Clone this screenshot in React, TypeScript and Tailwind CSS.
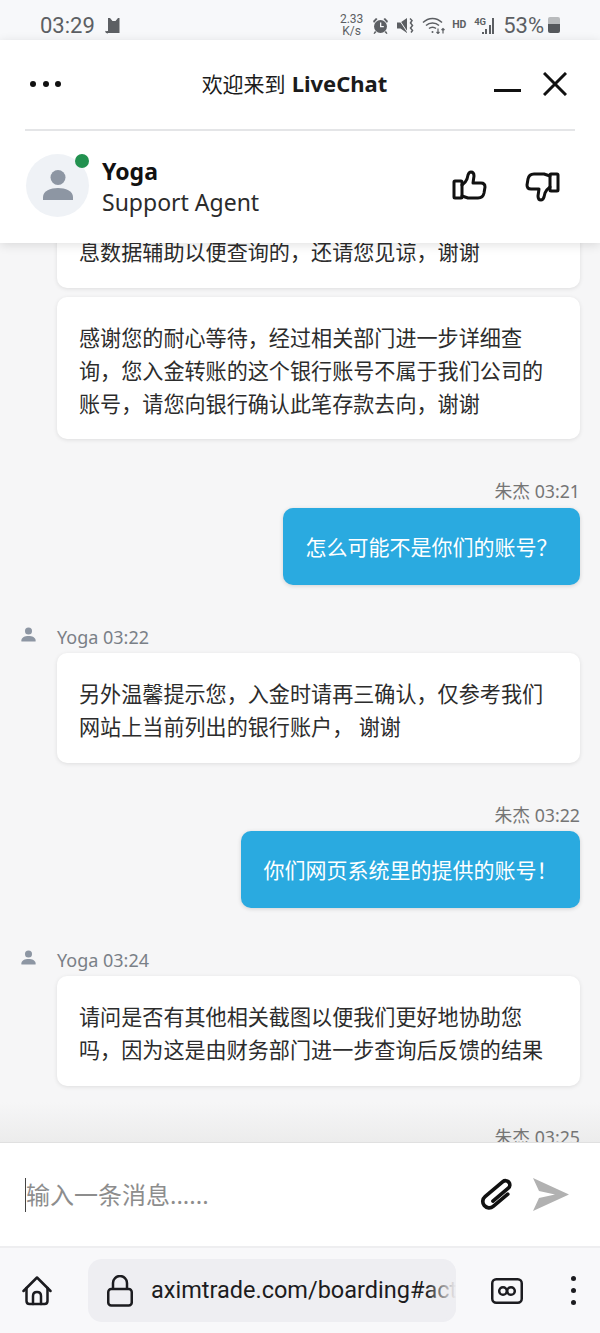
const fontStack = "font-['Noto_Sans','Noto_Sans_CJK_SC',sans-serif]";

function UserGlyph({ className }: { className: string }) {
  return (
    <svg viewBox="0 0 24 24" className={className} fill="currentColor">
      <circle cx="12" cy="7" r="5" />
      <path d="M2 22v-2c0-4 5-6 10-6s10 2 10 6v2z" />
    </svg>
  );
}

function ThumbIcon({ down }: { down?: boolean }) {
  return (
    <svg viewBox="0 0 36 34" className="h-[34px] w-[36px]" fill="none" stroke="#111" strokeWidth="3" strokeLinejoin="round" strokeLinecap="round">
      <g transform={down ? "rotate(180 18 17)" : undefined}>
        <rect x="2" y="12" width="8" height="17" rx="1" />
        <path d="M10 27l6 2h10q5 0 6-5l1-6q0-4-4-4h-8l1-7q0-4-3-4q-2 0-3 3l-1 4q-1 3-5 6" />
      </g>
    </svg>
  );
}

function StatusBar() {
  return (
    <div className="flex h-[40px] shrink-0 items-center justify-between bg-[#f7f8fa] pl-[40px] pr-[40px] pt-[10px] font-['Roboto',sans-serif] text-[#5c5f63]">
      <div className="flex items-center gap-[9px]">
        <span className="text-[22px]">03:29</span>
        <svg viewBox="0 0 18 17" className="h-[17px] w-[18px]" fill="#5c5f63">
          <path d="M6 1l2.500 3h3L14 1l1.500 0V16H4V1z" />
          <path d="M4 14c-2 0-2 1-2.500 0-.5-1-1 2.500 2.500 2.500z" />
        </svg>
      </div>
      <div className="flex items-center">
        <div className="flex w-[23px] flex-col items-center text-[12px] leading-[12px]">
          <span>2.33</span>
          <span>K/s</span>
        </div>
        <svg viewBox="0 0 17 17" className="ml-[9px] h-[17px] w-[17px]" fill="#5c5f63">
          <circle cx="8.500" cy="9.500" r="6.500" />
          <path d="M1 4l3-3 1.500 1-3.500 4zM16 4l-3-3-1.500 1 3.500 4zM3 14l-1.500 2.500 1 .5 2-2zM14 14l1.500 2.500-1 .5-2-2z" />
          <path d="M8 5.500h1.300v3.500h2.500v1.300H8z" fill="#f7f8fa" />
        </svg>
        <svg viewBox="0 0 17 17" className="ml-[8px] h-[17px] w-[17px]" fill="#5c5f63">
          <path d="M0 5.500h3.500L10 1v15L3.500 11.500H0z" />
          <path d="M13 1.500l2 2-1.500 2.500 2 2.500-2 2.500 2 2.500-1.500 2" fill="none" stroke="#5c5f63" strokeWidth="1.500" />
          <path d="M1 1l10 15" stroke="#f7f8fa" strokeWidth="1" />
        </svg>
        <svg viewBox="0 0 24 17" className="ml-[8px] h-[17px] w-[24px]" fill="none" stroke="#5c5f63" strokeWidth="1.500">
          <path d="M1 5.500c5.500-5.500 13.500-5.500 19 0M4 8.500c3.500-3.500 9.500-3.500 13 0M7 11.500c1.800-1.800 5.200-1.800 7 0" />
          <path d="M16 11.500v5M14.500 15l1.500 1.500 1.500-1.500M21 16.500v-5M19.500 13l1.500-1.500 1.500 1.500" strokeWidth="1.200" />
          <circle cx="10.500" cy="15" r="1" fill="#5c5f63" stroke="none" />
        </svg>
        <span className="ml-[6px] w-[13px] text-[10.500px] font-bold">HD</span>
        <div className="relative ml-[9px] h-[17px] w-[20px]">
          <span className="absolute left-0 top-0 text-[9.500px] font-bold leading-[9px]">4G</span>
          <div className="absolute bottom-0 right-0 flex items-end gap-[1.500px]">
            <div className="h-[2px] w-[2px] bg-[#5c5f63]" />
            <div className="h-[5px] w-[2px] bg-[#5c5f63]" />
            <div className="h-[9px] w-[2px] bg-[#5c5f63]" />
            <div className="h-[16px] w-[2px] bg-[#5c5f63]" />
          </div>
        </div>
        <span className="ml-[9px] text-[22px]">53%</span>
        <div className="ml-[4px] h-[16px] w-[12px] rounded-[2px] bg-[linear-gradient(#b9bbbd_45%,#55585c_45%)]" />
      </div>
    </div>
  );
}

function Header() {
  return (
    <div className="relative z-10 h-[203px] shrink-0 bg-white shadow-[0_2px_10px_rgba(0,0,0,0.12)]">
      <div className="mx-[25px] flex h-[91px] items-center justify-between border-b-2 border-[#e4e5e7] pb-[2px]">
        <div className="flex w-[36px] justify-between pl-[5px]">
          <div className="h-[6px] w-[6px] rounded-full bg-[#111]" />
          <div className="h-[6px] w-[6px] rounded-full bg-[#111]" />
          <div className="h-[6px] w-[6px] rounded-full bg-[#111]" />
        </div>
        <div className="ml-[34px] flex items-baseline gap-[6px] text-[21px] text-[#1b1b1b]">
          <span>欢迎来到</span>
          <span className="text-[22px] font-bold">LiveChat</span>
        </div>
        <div className="flex items-center gap-[22px] pr-[8px]">
          <div className="mt-[14px] h-[3px] w-[27px] bg-[#111]" />
          <svg viewBox="0 0 24 24" className="h-[24px] w-[24px]" fill="none" stroke="#111" strokeWidth="3">
            <path d="M1 1l22 22M23 1L1 23" />
          </svg>
        </div>
      </div>
      <div className="flex items-center justify-between pl-[26px] pr-[40px] pt-[21px]">
        <div className="flex items-center gap-[13px]">
          <div className="relative flex h-[63px] w-[63px] items-center justify-center rounded-full bg-[#eff2f6]">
            <UserGlyph className="h-[36px] w-[36px] text-[#8d96a3]" />
            <div className="absolute right-0 top-0 h-[14px] w-[14px] rounded-full bg-[#22914f]" />
          </div>
          <div className="mt-[4px] flex flex-col">
            <span className="text-[23px] font-bold leading-[31px] text-[#111]">Yoga</span>
            <span className="text-[23px] leading-[31px] text-[#2b2b2b]">Support Agent</span>
          </div>
        </div>
        <div className="mt-[2px] flex items-center gap-[36px]">
          <ThumbIcon />
          <ThumbIcon down />
        </div>
      </div>
    </div>
  );
}

function AgentCard({ lines, className = "pb-[20px]" }: { lines: string[]; className?: string }) {
  return (
    <div className={`ml-[57px] mr-[20px] rounded-[10px] bg-white pl-[22px] pr-[24px] pt-[24px] text-[21.100px] leading-[33px] text-[#2c2c2c] shadow-[0_1px_4px_rgba(0,0,0,0.1)] ${className}`}>
      {lines.map((line) => (
        <div key={line} className="whitespace-pre">
          {line}
        </div>
      ))}
    </div>
  );
}

function AgentMeta({ time }: { time: string }) {
  return (
    <div className="mb-[2px] flex h-[27px] items-center pl-[20px] text-[18px] text-[#7a8087]">
      <UserGlyph className="mb-[6px] h-[17px] w-[17px] text-[#8d96a3]" />
      <span className="ml-[20px]">{time}</span>
    </div>
  );
}

function UserMessage({ time, text, width }: { time: string; text?: string; width?: string }) {
  return (
    <div className="flex flex-col items-end pr-[20px]">
      <div className="mb-[2.500px] flex h-[27px] items-center text-[17.750px] text-[#757575]">{time}</div>
      {text && (
        <div className={`flex h-[77px] items-center justify-center rounded-[10px] bg-[#2aaae0] pt-[3px] text-[21px] text-white shadow-[0_1px_4px_rgba(0,0,0,0.15)] ${width}`}>
          {text}
        </div>
      )}
    </div>
  );
}

function ChatArea() {
  return (
    <div className="relative min-h-0 flex-1 overflow-hidden bg-[#f6f6f7]">
      <div className="absolute bottom-0 left-0 right-0 h-[40px] bg-gradient-to-b from-transparent to-[#ececec]" />
      <div className="relative -mt-[32px] flex flex-col">
        <AgentCard lines={["息数据辅助以便查询的，还请您见谅，谢谢"]} />
        <AgentCard lines={["感谢您的耐心等待，经过相关部门进一步详细查", "询，您入金转账的这个银行账号不属于我们公司的", "账号，请您向银行确认此笔存款去向，谢谢"]} className="mt-[9px] pb-[19px]" />
        <div className="mt-[39px]">
          <UserMessage time="朱杰 03:21" text="怎么可能不是你们的账号？" width="w-[297px]" />
        </div>
        <div className="mt-[39px]">
          <AgentMeta time="Yoga 03:22" />
          <AgentCard lines={["另外温馨提示您，入金时请再三确认，仅参考我们", "网站上当前列出的银行账户， 谢谢"]} />
        </div>
        <div className="mt-[39px]">
          <UserMessage time="朱杰 03:22" text="你们网页系统里的提供的账号！" width="w-[339px]" />
        </div>
        <div className="mt-[39px]">
          <AgentMeta time="Yoga 03:24" />
          <AgentCard lines={["请问是否有其他相关截图以便我们更好地协助您", "吗，因为这是由财务部门进一步查询后反馈的结果"]} />
        </div>
        <div className="mt-[38px]">
          <UserMessage time="朱杰 03:25" />
        </div>
      </div>
    </div>
  );
}

function InputBar() {
  return (
    <div className="flex h-[104px] shrink-0 items-center justify-between border-t border-[#e0e0e0] bg-white pl-[25px] pr-[31px]">
      <div className="flex items-center">
        <div className="h-[34px] w-px bg-[#444]" />
        <span className="text-[24px] text-[#8d8d8d]">输入一条消息......</span>
      </div>
      <div className="flex items-center gap-[16px]">
        <svg viewBox="0 0 36 32" className="h-[34px] w-[38px]" fill="none" stroke="#111" strokeWidth="3.500" strokeLinecap="round">
          <path transform="translate(5 26) rotate(-40)" d="M24 6H6A6 6 0 0 1 6 -6H28A4 4 0 0 1 28 2H9" />
        </svg>
        <svg viewBox="0 0 36 33" className="h-[33px] w-[36px]" fill="#b1b1b1">
          <path d="M0 0l36 16.500L0 33l6-13 16-3.500-16-3.500z" />
        </svg>
      </div>
    </div>
  );
}

function BrowserBar() {
  return (
    <div className="flex h-[87px] shrink-0 items-center border-t-2 border-[#eeeef0] bg-[#f8f8fa] pl-[22px] text-[#1c1c20]">
      <svg viewBox="0 0 30 30" className="h-[30px] w-[30px]" fill="none" stroke="#1c1c20" strokeWidth="2.500" strokeLinecap="round" strokeLinejoin="round">
        <path d="M1.500 15L15 1.500 28.500 15" />
        <path d="M4.500 12v13q0 3 3 3h15q3 0 3-3V12" />
        <path d="M11 28v-8q0-4 4-4t4 4v8" />
      </svg>
      <div className="relative ml-[36px] flex h-[63px] w-[368px] items-center overflow-hidden rounded-[14px] bg-[#eeeef2] pl-[19px]">
        <svg viewBox="0 0 26 32" className="h-[32px] w-[26px] shrink-0" fill="none" stroke="#1c1c20" strokeWidth="2.500">
          <rect x="1.250" y="14" width="23.500" height="16.500" rx="3" />
          <path d="M6 14V8a7 7 0 0 1 14 0v6" />
        </svg>
        <span className="ml-[18px] whitespace-nowrap font-['Roboto',sans-serif] text-[23.500px]">aximtrade.com/boarding#act</span>
        <div className="absolute bottom-0 right-0 top-0 w-[30px] bg-gradient-to-r from-transparent to-[#eeeef2]" />
      </div>
      <svg viewBox="0 0 32 26" className="ml-[35px] h-[26px] w-[32px]" fill="none" stroke="#1c1c20" strokeWidth="2.500">
        <rect x="1.250" y="1.250" width="29.500" height="23.500" rx="4" />
        <circle cx="12" cy="13" r="3.800" />
        <circle cx="20" cy="13" r="3.800" />
      </svg>
      <div className="ml-[48px] flex flex-col gap-[7px]">
        <div className="h-[5px] w-[5px] rounded-full bg-[#1c1c20]" />
        <div className="h-[5px] w-[5px] rounded-full bg-[#1c1c20]" />
        <div className="h-[5px] w-[5px] rounded-full bg-[#1c1c20]" />
      </div>
    </div>
  );
}

export default function App() {
  return (
    <div className={`flex h-[1333px] w-[600px] flex-col overflow-hidden ${fontStack}`}>
      <StatusBar />
      <Header />
      <ChatArea />
      <InputBar />
      <BrowserBar />
    </div>
  );
}
